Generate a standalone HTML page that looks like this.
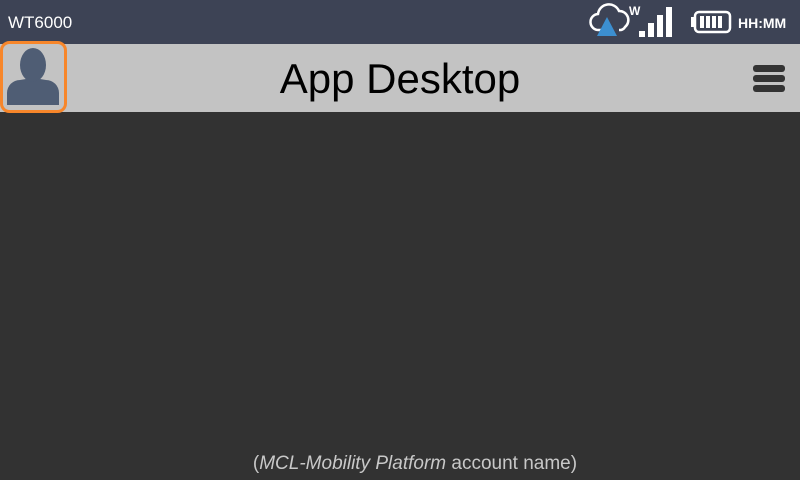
<!DOCTYPE html>
<html><head><style>
body{margin:0;width:800px;height:480px;overflow:hidden;background:#323232;font-family:"Liberation Sans",sans-serif;position:relative}
.sb{position:absolute;left:0;top:0;width:800px;height:44px;background:#3d4355;color:#fff}
.hd{position:absolute;left:0;top:44px;width:800px;height:68px;background:#c3c3c3}
</style></head><body>
<div class="sb">
<div style="position:absolute;left:8px;top:13px;font-size:17px">WT6000</div>
<svg style="position:absolute;left:588px;top:0" width="212" height="44">
<path d="M13 30 h-2 a8 8 0 0 1 -1 -16 a11 11 0 0 1 21 -3 a9 9 0 0 1 6 16 a6 6 0 0 1 -4 3 h-2" fill="none" stroke="#fff" stroke-width="2.5"/>
<polygon points="19,17 29,36 9,36" fill="#3c8fd0"/>
<text x="41" y="15" fill="#fff" font-size="12" font-weight="bold" font-family="Liberation Sans">W</text>
<rect x="51" y="31" width="6" height="6" fill="#fff"/>
<rect x="60" y="23" width="6" height="14" fill="#fff"/>
<rect x="69" y="15" width="6" height="22" fill="#fff"/>
<rect x="78" y="7" width="6" height="30" fill="#fff"/>
<rect x="107" y="12" width="35" height="20" rx="4" fill="none" stroke="#fff" stroke-width="2.5"/>
<rect x="103" y="17" width="4" height="10" fill="#fff"/>
<rect x="112" y="16" width="4" height="12" fill="#fff"/>
<rect x="118" y="16" width="4" height="12" fill="#fff"/>
<rect x="124" y="16" width="4" height="12" fill="#fff"/>
<rect x="130" y="16" width="4" height="12" fill="#fff"/>
<text x="150" y="28" fill="#fff" font-size="14" font-weight="bold" font-family="Liberation Sans">HH:MM</text>
</svg>
</div>
<div class="hd">
<svg style="position:absolute;left:0;top:-3px" width="70" height="74">
<rect x="1.5" y="1.5" width="64" height="69" rx="8" fill="#c3c3c3" stroke="#f7862a" stroke-width="3"/>
<ellipse cx="33" cy="24" rx="13" ry="17" fill="#4f5d74"/>
<path d="M7 64 v-12 a13 13 0 0 1 13 -13 l6 -1 q7 5 14 0 l6 1 a13 13 0 0 1 13 13 v12 z" fill="#4f5d74"/>
</svg>
<div style="position:absolute;left:0;width:800px;top:11px;text-align:center;font-size:42px;color:#000">App Desktop</div>
<div style="position:absolute;left:753px;top:21px;width:32px">
<div style="height:7px;background:#333;border-radius:3px;margin-bottom:3px"></div>
<div style="height:7px;background:#333;border-radius:3px;margin-bottom:3px"></div>
<div style="height:7px;background:#333;border-radius:3px"></div>
</div>
</div>
<div style="position:absolute;left:0;width:830px;top:453px;text-align:center;font-size:19px;color:#c8c8c8">(<i>MCL-Mobility Platform</i> account name)</div>
</body></html>
